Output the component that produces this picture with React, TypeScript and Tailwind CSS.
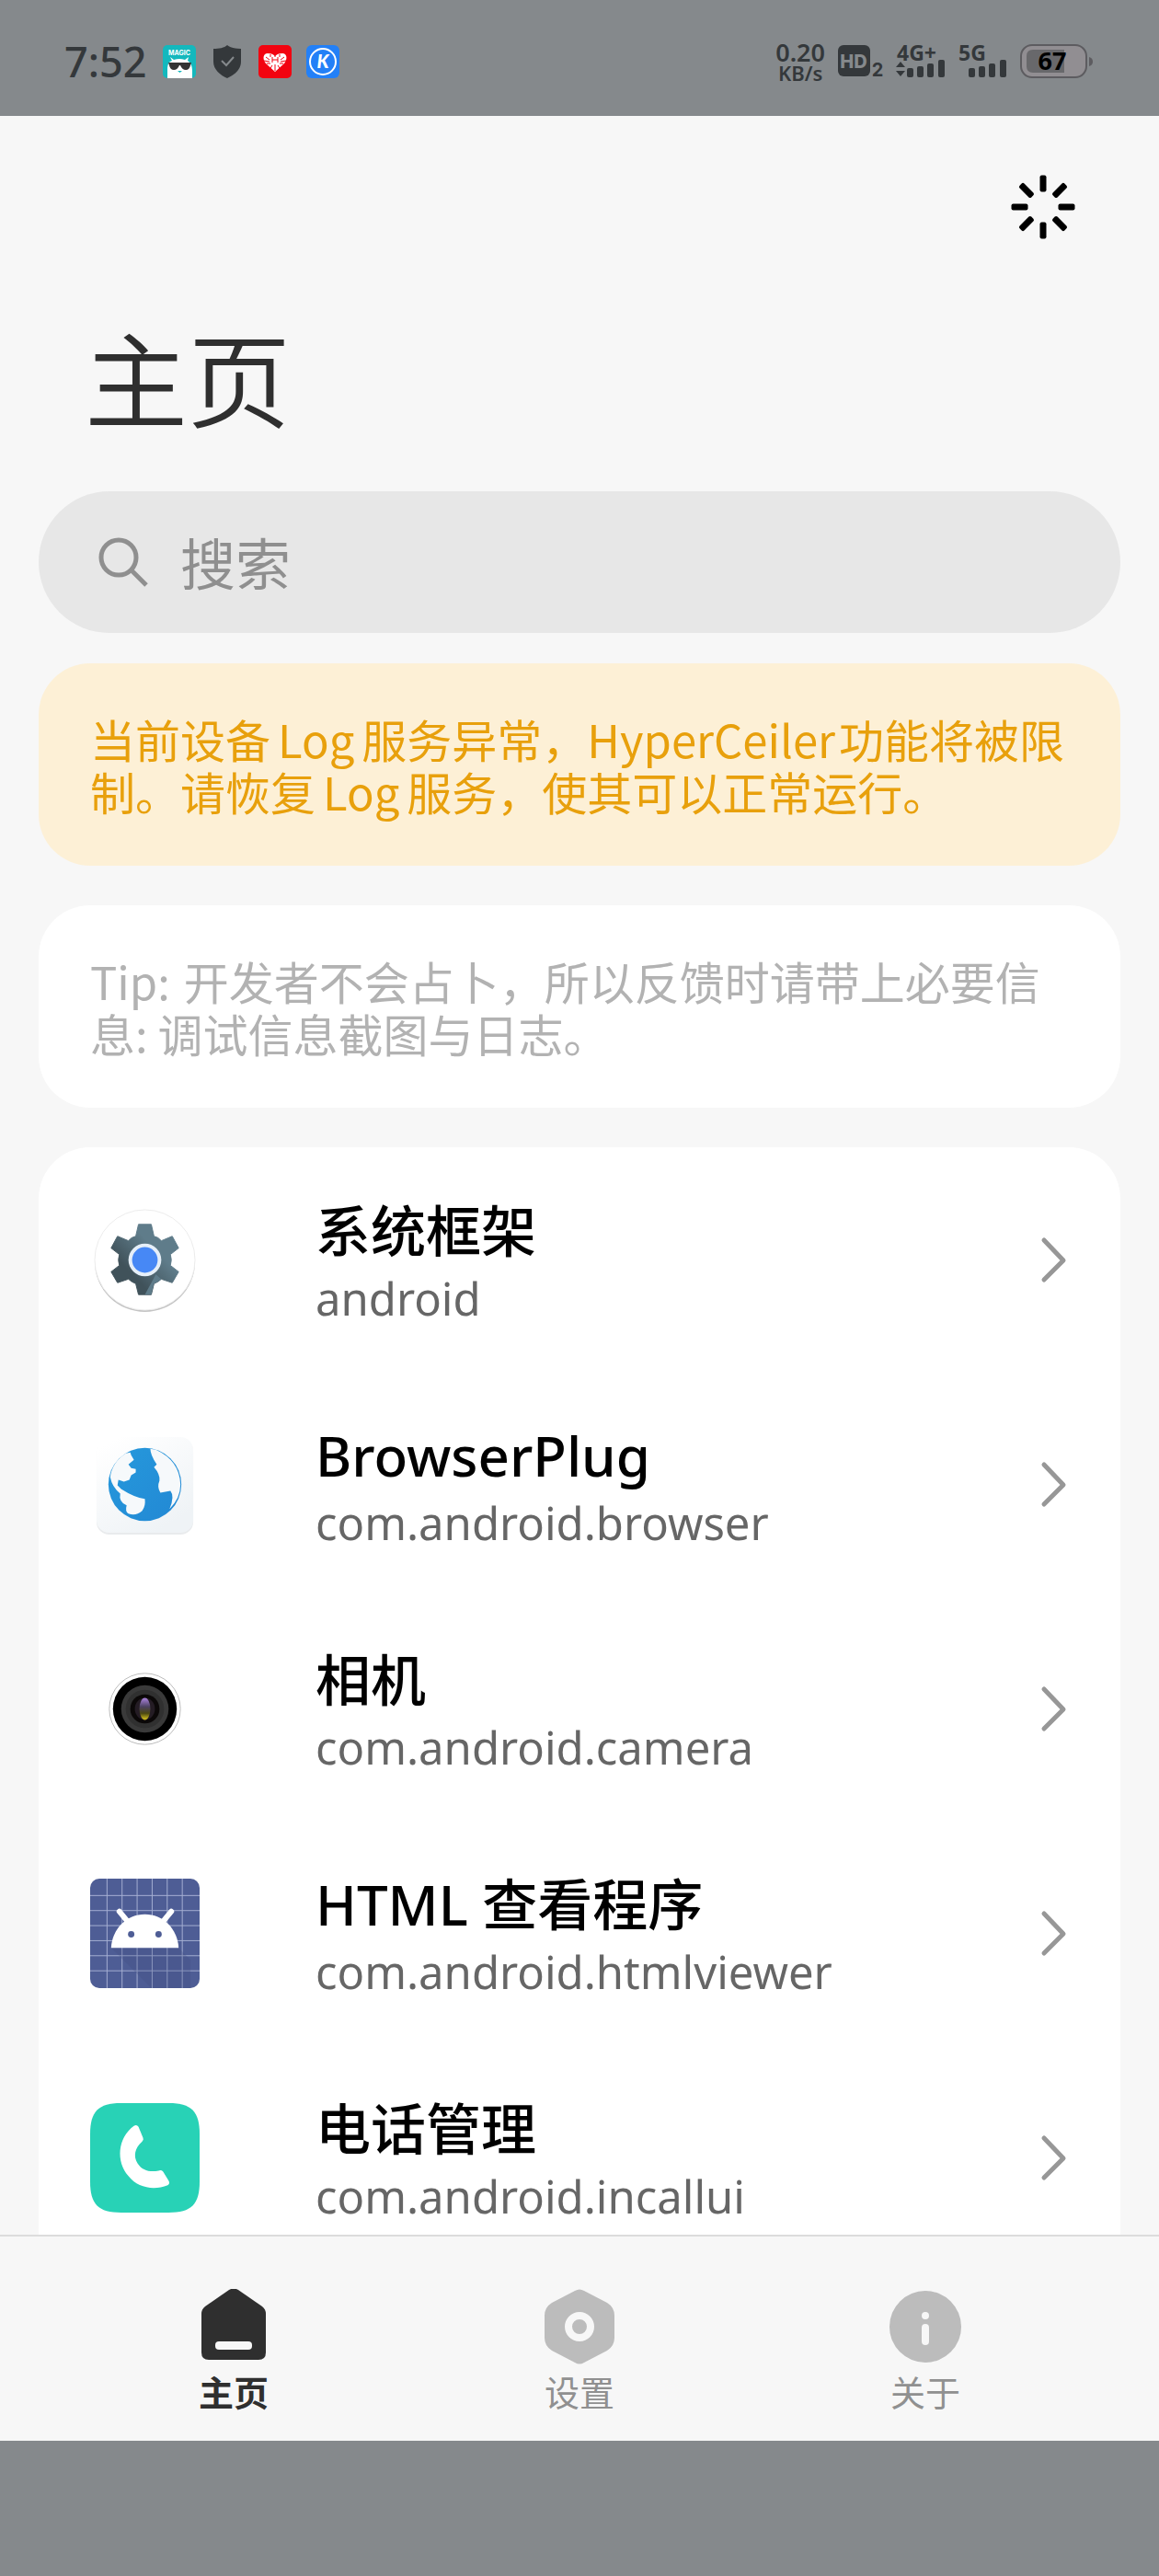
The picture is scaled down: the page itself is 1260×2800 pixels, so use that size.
import type { ReactNode } from 'react';

type AppEntry = {
  name: string;
  pkg: string;
  icon: ReactNode;
};

function MagicIcon() {
  return (
    <svg viewBox="0 0 36 36" className="size-9" aria-hidden="true">
      <rect width="36" height="36" rx="5" fill="#14b8bd" />
      <text x="18" y="11" textAnchor="middle" fontSize="7" fontWeight="700" fill="#fff" fontFamily="Inter, sans-serif">
        MAGIC
      </text>
      <path d="M5 36V27C5 20 7 18 10 17L8 13L12 16Q18 14 24 16L28 13L27 17C30 19 32 22 32 28V36Z" fill="#fff" />
      <path d="M6 19H31L30 22Q29 27 25 27Q21 27 19 22H18Q16 27 12 27Q8 27 7 22Z" fill="#333" />
      <path d="M16 28H21L18.500 30Z" fill="#14b8bd" />
    </svg>
  );
}

function ShieldIcon() {
  return (
    <svg viewBox="0 0 36 36" className="size-9" aria-hidden="true">
      <path d="M18 0C21 3 27 4 33 4V18C33 27 25 33 18 36C11 33 3 27 3 18V4C9 4 15 3 18 0Z" fill="#34383b" />
      <path d="M12 17L17 22L25 13" fill="none" stroke="#85898c" strokeWidth="2" />
    </svg>
  );
}

function HeartIcon() {
  return (
    <svg viewBox="0 0 36 36" className="size-9" aria-hidden="true">
      <rect width="36" height="36" rx="5" fill="#f20310" />
      <path d="M18 29L8 20C4 15 5 9 10 9C14 9 16 10 18 12C20 10 22 9 26 9C31 9 32 15 28 20Z" fill="#fff" />
      <path
        d="M8 13L12 16M6 17L12 18M9 20L13 20M13 10L13 13M28 13L24 16M30 17L24 18M27 20L23 20M23 10L23 13M15 22L13 25M21 22L23 25M18 21V28M15 13V19M21 13V19M15 16H21M18 10V13"
        stroke="#f20310"
        strokeWidth="1"
      />
    </svg>
  );
}

function KIcon() {
  return (
    <svg viewBox="0 0 36 36" className="size-9" aria-hidden="true">
      <rect width="36" height="36" rx="6" fill="#2380f7" />
      <circle cx="18" cy="18" r="14" fill="none" stroke="#fff" strokeWidth="2" />
      <text x="18" y="25" textAnchor="middle" fontSize="20" fontWeight="900" fontStyle="italic" fill="#fff" fontFamily="Lato, sans-serif">
        K
      </text>
    </svg>
  );
}

function HdIcon() {
  return (
    <svg viewBox="0 0 50 38" className="h-[38px] w-[50px] overflow-visible" aria-hidden="true">
      <rect x="0" y="1" width="35" height="34" rx="6" fill="#34383b" />
      <text x="17" y="26" textAnchor="middle" fontSize="20" fontWeight="800" fill="#85898c" fontFamily="Inter, sans-serif">
        HD
      </text>
      <text x="43" y="35" textAnchor="middle" fontSize="20" fontWeight="700" fill="#34383b" fontFamily="Inter, sans-serif">
        2
      </text>
    </svg>
  );
}

function Signal({ label, arrows = false }: { label: string; arrows?: boolean }) {
  return (
    <svg viewBox="0 0 53 38" className="h-[38px] w-[53px] overflow-visible" fill="#34383b" role="img" aria-label={label}>
      <text x="0" y="18" fontSize="23" fontWeight="700" fontFamily="'Noto Sans', sans-serif">
        {label}
      </text>
      {arrows && <path d="M4 19L9 25H-1ZM4 35L9 29H-1Z" />}
      <rect x="11" y="26" width="7" height="10" rx="2" />
      <rect x="22" y="24" width="7" height="12" rx="2" />
      <rect x="33" y="21" width="7" height="15" rx="2" />
      <rect x="45" y="17" width="7" height="19" rx="2" />
    </svg>
  );
}

function Battery() {
  return (
    <svg viewBox="0 0 80 38" className="h-[38px] w-20" role="img" aria-label="67%">
      <rect x="1" y="1" width="71" height="35" rx="12" fill="#918e92" stroke="#5d5c60" strokeWidth="2" />
      <path d="M14 6H48V31H14Q7 31 7 24V13Q7 6 14 6Z" fill="#68686b" />
      <path d="M75 14Q79 15 79 19Q79 23 75 24Z" fill="#5d5c60" />
      <text x="35" y="28" textAnchor="middle" fontSize="27" fontWeight="700" fill="#000" fontFamily="'Noto Sans', sans-serif">
        67
      </text>
    </svg>
  );
}

function StatusBar() {
  return (
    <div className="flex h-[126px] shrink-0 items-center justify-between bg-[#85898c] pt-2 pr-[71px] pl-[70px] text-[#34383b]">
      <div className="flex items-center gap-4">
        <span className="mr-0.5 text-[45px] leading-[50px] font-medium">7:52</span>
        <MagicIcon />
        <ShieldIcon />
        <HeartIcon />
        <KIcon />
      </div>
      <div className="flex items-center gap-[14px]">
        <div className="flex flex-col items-center font-semibold">
          <span className="text-[27px] leading-[24px]">0.20</span>
          <span className="text-[22px] leading-[20px]">KB/s</span>
        </div>
        <HdIcon />
        <Signal label="4G+" arrows />
        <Signal label="5G" />
        <Battery />
      </div>
    </div>
  );
}

function Spinner() {
  const angles = [0, 45, 90, 135, 180, 225, 270, 315];
  return (
    <svg viewBox="0 0 70 70" className="size-[70px]" aria-hidden="true">
      {angles.map((angle) => (
        <rect key={angle} x="31.500" y="0.500" width="7" height="18" rx="2" transform={`rotate(${angle} 35 35)`} />
      ))}
    </svg>
  );
}

function GearAppIcon() {
  return (
    <svg viewBox="0 0 120 120" className="size-[119px] shrink-0" aria-hidden="true">
      <defs>
        <linearGradient id="gear" x1="0" y1="1" x2="1" y2="0">
          <stop offset="0.3" stopColor="#40525a" />
          <stop offset="0.65" stopColor="#5f7c8a" />
        </linearGradient>
      </defs>
      <circle cx="60" cy="62" r="55" fill="#c4c4c4" />
      <circle cx="60" cy="60" r="55" fill="#fff" stroke="#ececec" />
      <path
        d="M53 21H67L70 34Q75 35 78 39L90 34L97 47L88 54Q90 60 88 66L97 73L90 85L78 81Q75 84 70 86L67 98H53L50 86Q45 84 42 81L30 85L23 73L32 66Q30 60 32 54L23 47L30 34L42 39Q45 35 50 34Z"
        fill="url(#gear)"
        stroke="url(#gear)"
        strokeWidth="1"
        strokeLinejoin="round"
      />
      <path d="M60 98L72 76L78 81Q75 84 70 86L67 98Z" fill="#5f7c8a" />
      <circle cx="60" cy="60" r="18" fill="#e6eff8" />
      <circle cx="60" cy="60" r="14" fill="#4788f5" />
    </svg>
  );
}

function BrowserAppIcon() {
  return (
    <svg viewBox="0 0 120 120" className="size-[119px] shrink-0" aria-hidden="true">
      <defs>
        <linearGradient id="tile" x1="0" y1="0" x2="0.600" y2="1">
          <stop offset="0.1" stopColor="#fff" />
          <stop offset="1" stopColor="#eff3f6" />
        </linearGradient>
        <linearGradient id="sea" x1="0" y1="0" x2="1" y2="1">
          <stop offset="0" stopColor="#2699dc" />
          <stop offset="1" stopColor="#2288d4" />
        </linearGradient>
      </defs>
      <rect x="7" y="10" width="106" height="105" rx="14" fill="#e9ebed" />
      <rect x="7" y="8" width="106" height="105" rx="14" fill="url(#tile)" />
      <circle cx="60" cy="60" r="40" fill="url(#sea)" />
      <g fill="#f6f9fb">
        <path d="M44 25L45 28L48 33L42 38L45 42L50 43V47L45 50L43 55L37 57L31 55L30 61L34 65Q48 74 60 76Q61 84 57 89Q50 95 42 92Q38 90 40 83Q31 79 33 70Q24 63 22 52Q24 36 39 26Z" />
        <path d="M66 21Q66 28 73 38L70 41Q77 49 76 56Q73 63 77 69L88 67Q93 73 87 87Q99 75 99 60Q98 34 72 22Z" />
      </g>
    </svg>
  );
}

function CameraAppIcon() {
  return (
    <svg viewBox="0 0 120 120" className="size-[119px] shrink-0" aria-hidden="true">
      <defs>
        <linearGradient id="lens" x1="0" y1="0" x2="0" y2="1">
          <stop offset="0.050" stopColor="#a07bd0" />
          <stop offset="0.400" stopColor="#4c4260" />
          <stop offset="0.700" stopColor="#4b4712" />
          <stop offset="0.950" stopColor="#c4b31c" />
        </linearGradient>
      </defs>
      <circle cx="60" cy="60" r="39" fill="#fff" stroke="#bcbcbc" />
      <circle cx="60" cy="60" r="35" fill="#000" />
      <circle cx="60" cy="60" r="26" fill="#3a3a3a" />
      <circle cx="60" cy="60" r="21" fill="#303030" />
      <circle cx="60" cy="60" r="16" fill="#0b0808" />
      <ellipse cx="60" cy="60" rx="11" ry="12" fill="#241c24" />
      <ellipse cx="60" cy="60" rx="6" ry="12" fill="url(#lens)" />
    </svg>
  );
}

function AndroidAppIcon() {
  return (
    <svg viewBox="0 0 120 120" className="size-[119px] shrink-0" aria-hidden="true">
      <rect width="120" height="120" rx="10" fill="#4e5d95" />
      <path
        d="M18.500 0V120M35 0V120M51.500 0V120M68 0V120M84.500 0V120M101 0V120M0 18.500H120M0 35H120M0 51.500H120M0 68H120M0 84.500H120M0 101H120"
        stroke="#a5afd2"
        strokeWidth="1"
      />
      <path d="M23 76H97L110 89V120H67Z" fill="#404d80" opacity="0.250" />
      <path d="M32 36L42 48M89 36L79 48" stroke="#fff" strokeWidth="6" strokeLinecap="round" />
      <path d="M23 76C24 55 40 39 60 39S96 55 97 76Z" fill="#fff" />
      <circle cx="45" cy="61" r="3.500" fill="#4e5d95" />
      <circle cx="75" cy="61" r="3.500" fill="#4e5d95" />
    </svg>
  );
}

function PhoneAppIcon() {
  return (
    <svg viewBox="0 0 120 120" className="size-[119px] shrink-0" aria-hidden="true">
      <path d="M34 0H86C111 0 120 9 120 34V86C120 111 111 120 86 120H34C9 120 0 111 0 86V34C0 9 9 0 34 0Z" fill="#28d2b6" />
      <path
        d="M48 25Q51 23 53 26L58 38Q59 40 57 42C49 49 47 58 52 66C57 74 66 76 75 74Q78 73 80 75L86 85Q88 88 85 90C70 96 52 93 42 80C28 64 30 38 48 25Z"
        fill="#fff"
      />
    </svg>
  );
}

const apps: AppEntry[] = [
  { name: '系统框架', pkg: 'android', icon: <GearAppIcon /> },
  { name: 'BrowserPlug', pkg: 'com.android.browser', icon: <BrowserAppIcon /> },
  { name: '相机', pkg: 'com.android.camera', icon: <CameraAppIcon /> },
  { name: 'HTML 查看程序', pkg: 'com.android.htmlviewer', icon: <AndroidAppIcon /> },
  { name: '电话管理', pkg: 'com.android.incallui', icon: <PhoneAppIcon /> },
];

function AppRow({ name, pkg, icon }: AppEntry) {
  return (
    <li>
      <a href="#" className="flex h-[244px] items-center pr-14 pl-14">
        {icon}
        <div className="ml-[126px] min-w-0 flex-1 pt-1">
          <h2 className="text-[60px] leading-[80px] font-medium text-black">{name}</h2>
          <p className="text-[49px] leading-[66px] text-[#666]">{pkg}</p>
        </div>
        <svg viewBox="0 0 32 56" className="h-14 w-8 shrink-0" aria-hidden="true">
          <path
            d="M5 7L26 29L5 50"
            fill="none"
            stroke="#979797"
            strokeWidth="5"
            strokeLinecap="round"
            strokeLinejoin="round"
          />
        </svg>
      </a>
    </li>
  );
}

function BottomNav() {
  return (
    <nav className="grid shrink-0 grid-cols-3 border-t-2 border-[#dcdcdc] bg-[#f7f7f7] px-[66px] pt-[57px] pb-[29px] text-[38px] leading-[48px] text-[#909090]">
      <a href="#" aria-current="page" className="flex flex-col items-center gap-1.5 font-bold text-[#2f2f2f]">
        <svg viewBox="0 0 82 82" className="size-[82px]" aria-hidden="true">
          <path
            d="M36 1Q41 -2 46 1L72 19Q76 22 76 27V69Q76 77 68 77H14Q6 77 6 69V27Q6 22 10 19Z"
            fill="currentColor"
          />
          <rect x="21" y="57" width="40" height="9" rx="4" fill="#f7f7f7" />
        </svg>
        主页
      </a>
      <a href="#" className="flex flex-col items-center gap-1.5">
        <svg viewBox="0 0 82 82" className="size-[82px]" aria-hidden="true">
          <path
            d="M36 2Q41 -1 46 2L71 15Q79 20 79 29V53Q79 62 71 67L46 80Q41 83 36 80L11 67Q3 62 3 53V29Q3 20 11 15Z"
            fill="#bcbcbc"
          />
          <circle cx="41" cy="41" r="12" fill="none" stroke="#f7f7f7" strokeWidth="8" />
        </svg>
        设置
      </a>
      <a href="#" className="flex flex-col items-center gap-1.5">
        <svg viewBox="0 0 82 82" className="size-[82px]" aria-hidden="true">
          <circle cx="41" cy="41" r="39" fill="#bcbcbc" />
          <circle cx="41" cy="29" r="4" fill="#f7f7f7" />
          <rect x="37" y="38" width="8" height="23" rx="4" fill="#f7f7f7" />
        </svg>
        关于
      </a>
    </nav>
  );
}

export default function App() {
  return (
    <div className="flex h-screen flex-col bg-[#f7f7f7] font-['Noto_Sans','Noto_Sans_CJK_SC',sans-serif]">
      <StatusBar />

      <main className="min-h-0 flex-1 overflow-hidden px-[42px]">
        <div className="flex justify-end pt-16 pr-[49px]">
          <button type="button" aria-label="重启">
            <Spinner />
          </button>
        </div>
        <h1 className="mt-[92px] pl-[50px] font-['Noto_Sans_CJK_SC',sans-serif] text-[112px] leading-[112px] font-[350] text-[#2f2f2f]">
          主页
        </h1>

        {/* Search */}
        <label className="mt-[70px] flex h-[154px] items-center gap-[34px] rounded-full bg-[#e7e7e7] px-16">
          <svg viewBox="0 0 56 56" className="size-14 shrink-0" fill="none" stroke="#8f8f8f" strokeWidth="5" aria-hidden="true">
            <circle cx="23" cy="23" r="19" />
            <path d="M36 36L53 53" />
          </svg>
          <input
            type="search"
            aria-label="搜索"
            placeholder="搜索"
            className="min-w-0 flex-1 bg-transparent pt-1 text-[60px] leading-[80px] outline-none placeholder:text-[#8f8f8f]"
          />
        </label>

        {/* Notices */}
        <p className="mt-[33px] rounded-[56px] bg-[#fdf0d6] px-14 py-[53px] font-['Noto_Sans_CJK_SC',sans-serif] text-[49px] leading-[57px] text-[#e8a00c]">
          当前设备<span className="mx-2">Log</span>服务异常，<span className="mr-1">HyperCeiler</span>功能将被限制。请恢复
          <span className="mx-2">Log</span>服务，使其可以正常运行。
        </p>
        <p className="mt-[43px] rounded-[56px] bg-white px-14 py-[53px] font-['Noto_Sans_CJK_SC',sans-serif] text-[49px] leading-[57px] text-[#b2b2b2]">
          <span className="mr-1">Tip:</span> 开发者不会占卜，所以反馈时请带上必要信息: 调试信息截图与日志。
        </p>

        {/* App list */}
        <ul className="mt-[43px] rounded-[56px] bg-white pb-24">
          {apps.map((app) => (
            <AppRow key={app.pkg} {...app} />
          ))}
        </ul>
      </main>

      <BottomNav />
      <div className="h-[147px] shrink-0 bg-[#85898c]" />
    </div>
  );
}
